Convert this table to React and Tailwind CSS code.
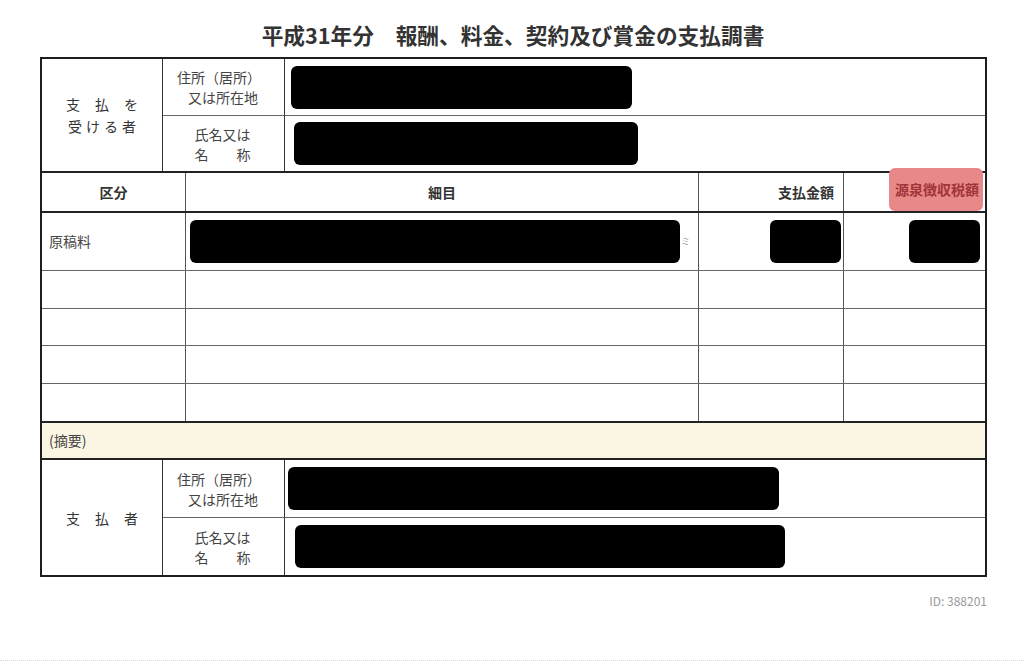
const font = "font-['Noto_Sans_CJK_JP','Noto_Sans',sans-serif]";

const Redact = ({ className }) => (
  <div className={`bg-black rounded-[6px] ${className}`} />
);

const PartySection = ({ left, top, bottom, boxA, boxB, rowsClass }) => (
  <div className={`grid grid-cols-[121px_122px_1fr] ${rowsClass}`}>
    <div className="row-span-2 border-r-[1.5px] border-[#333] flex flex-col items-center justify-center text-[14px] text-[#333] leading-[22px]">
      {left}
    </div>
    <div className="border-r-[1.5px] border-b border-[#333] border-b-[#666] flex flex-col items-center justify-center pr-[10px] text-[14px] text-[#444] leading-[20px]">
      <span className="pl-[1px]">{top[0]}</span>
      <span className="pl-[9px]">{top[1]}</span>
    </div>
    <div className="border-b border-[#666] flex items-center">{boxA}</div>
    <div className="border-r-[1.5px] border-[#333] flex flex-col items-center justify-center pr-[2px] text-[14px] text-[#444] leading-[20px]">
      <span>{bottom[0]}</span>
      <span>{bottom[1]}</span>
    </div>
    <div className="flex items-center">{boxB}</div>
  </div>
);

const rows = [38, 37, 38, 37];

export default function App() {
  return (
    <div className={`${font} bg-white w-[1024px] h-[666px] relative`}>
      <h1 className="pt-[19px] h-[57px] text-center text-[21.7px] leading-[32px] font-bold text-[#333] pl-[2px]">
        平成31年分　報酬、料金、契約及び賞金の支払調書
      </h1>

      <div className="ml-[40px] w-[947px] border-2 border-[#1e1e1e] relative">
        {/* 支払を受ける者 */}
        <div className="border-b-2 border-[#222]">
          <PartySection
            rowsClass="grid-rows-[57px_55px]"
            left={<><span className="tracking-[15px] pl-[15px]">支払を</span><span className="tracking-[4px] pl-[4px]">受ける者</span></>}
            top={['住所（居所）', '又は所在地']}
            bottom={['氏名又は', '名　　称']}
            boxA={<Redact className="ml-[6px] w-[341px] h-[43px]" />}
            boxB={<Redact className="ml-[9px] w-[344px] h-[43px]" />}
          />
        </div>

        {/* header */}
        <div className="grid grid-cols-[144px_513px_145px_1fr] h-[40px] border-b-2 border-[#222] text-[14px] font-bold text-[#333]">
          <div className="border-r border-[#555] flex items-center justify-center">区分</div>
          <div className="border-r border-[#555] flex items-center justify-center">細目</div>
          <div className="border-r border-[#555] flex items-center justify-end pr-[9px]">支払金額</div>
          <div className="flex items-center justify-end pr-[6px]">
            <span className="absolute right-[2px] top-[109px] w-[94px] h-[43px] bg-[#e98888] rounded-[6px] flex items-center justify-end pr-[4px] text-[#a03538]">
              源泉徴収税額
            </span>
          </div>
        </div>

        {/* first row */}
        <div className="grid grid-cols-[144px_513px_145px_1fr] h-[58px] border-b border-[#666]">
          <div className="border-r border-[#555] flex items-center pl-[7px] text-[14px] text-[#444]">原稿料</div>
          <div className="border-r border-[#555] flex items-center pl-[4px]">
            <Redact className="w-[490px] h-[43px]" />
            <span className="ml-[1px] text-[9px] text-[#999]">ミ</span>
          </div>
          <div className="border-r border-[#555] flex items-center justify-end pr-[2px]">
            <Redact className="w-[71px] h-[43px]" />
          </div>
          <div className="flex items-center justify-end pr-[5px]">
            <Redact className="w-[71px] h-[43px]" />
          </div>
        </div>

        {rows.map((h, i) => (
          <div
            key={i}
            style={{ height: h }}
            className={`grid grid-cols-[144px_513px_145px_1fr] ${i < rows.length - 1 ? 'border-b border-[#666]' : ''}`}
          >
            <div className="border-r border-[#555]" />
            <div className="border-r border-[#555]" />
            <div className="border-r border-[#555]" />
            <div />
          </div>
        ))}

        {/* 摘要 */}
        <div className="h-[39px] border-y-2 border-[#222] bg-[#fbf6e3] flex items-center pl-[7px] text-[14px] text-[#444]">
          (摘要)
        </div>

        {/* 支払者 */}
        <PartySection
          rowsClass="grid-rows-[58px_57px]"
          left={<span className="tracking-[15px] pl-[15px]">支払者</span>}
          top={['住所（居所）', '又は所在地']}
          bottom={['氏名又は', '名　　称']}
          boxA={<Redact className="ml-[3px] w-[491px] h-[43px]" />}
          boxB={<Redact className="ml-[10px] w-[490px] h-[43px]" />}
        />
      </div>

      <div className="ml-[40px] w-[947px] text-right text-[12px] text-[#9a9a9a] mt-[15px]">
        ID: 388201
      </div>

      <div className="absolute left-0 right-0 top-[660px] border-t border-dotted border-[#d8d8d8]" />
    </div>
  );
}
